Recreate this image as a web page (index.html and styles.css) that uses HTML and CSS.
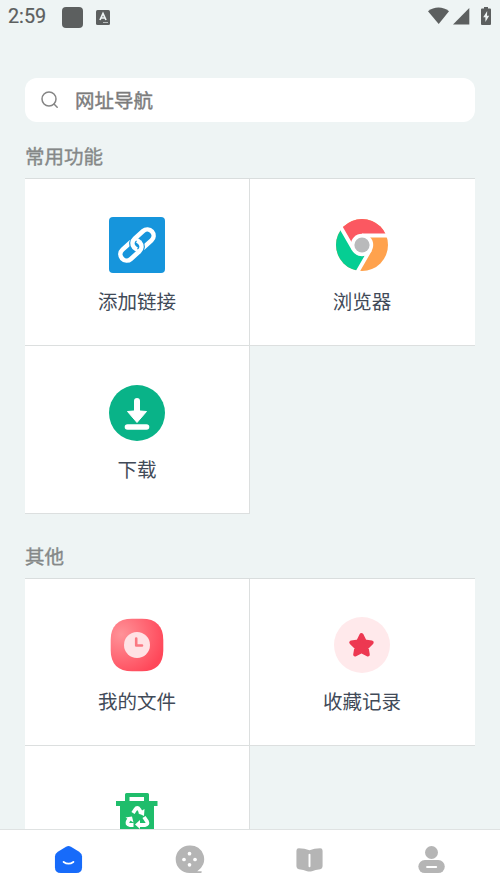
FILE: index.html
```html
<!DOCTYPE html>
<html lang="zh-CN">
<head>
<meta charset="utf-8">
<title>网址导航</title>
<link rel="stylesheet" href="styles.css">
</head>
<body>
<header class="status">
  <span class="time">2:59</span>
  <span class="chip"></span>
  <svg class="keyboard" width="14" height="15" viewBox="0 0 14 15"><rect width="14" height="15" rx="1.5" fill="#5c5f5f"/><path d="M4 10 7 3.5 10 10M5.2 8h3.6" fill="none" stroke="#eef4f4" stroke-width="1.7"/><path d="M7 12.5h5" stroke="#b9bdbd"/></svg>
  <svg class="signals" width="64" height="20" viewBox="0 0 64 20"><g fill="#5c5f5f"><path d="M0 4.200C6-.8 15-.8 21 4.200L10.700 17Z"/><path d="M41.300 1v16.500H25Z"/><path d="M56 0h4v1.500h2q1 0 1 1V17q0 1-1 1h-8q-1 0-1-1V2.500q0-1 1-1h2Z"/></g><path d="m59.200 4-4 6.200h2.200V15l3.800-6.300H59Z" fill="#eef4f4"/></svg>
</header>
<main class="content">
  <div class="search">
    <svg width="20" height="20" viewBox="0 0 20 20" fill="none" stroke="#858585" stroke-width="1.500" stroke-linecap="round"><circle cx="9" cy="9" r="7"/><path d="m14 14 3.200 3.200"/></svg>
    <span>网址导航</span>
  </div>
  <h2 class="heading">常用功能</h2>
  <section class="grid">
    <div class="cell">
      <svg class="icon" viewBox="0 0 56 56"><rect width="56" height="56" rx="4" fill="#1695dc"/><g transform="translate(28 28) rotate(-42)" fill="none" stroke="#fff" stroke-width="4.600"><rect x="-20.150" y="-6.250" width="24" height="12.500" rx="6.250"/><path d="M-3.850 0A6.250 6.250 0 0 1 2.400-6.250" stroke="#1695dc" stroke-width="7"/><rect x="-3.850" y="-6.250" width="24" height="12.500" rx="6.250"/><path d="M3.850 0A6.250 6.250 0 0 1-2.400 6.250" stroke="#1695dc" stroke-width="7"/><path d="M3.850-.5V0A6.250 6.250 0 0 1-2.400 6.250H-3"/></g></svg>
      <span class="label">添加链接</span>
    </div>
    <div class="cell">
      <svg class="icon" viewBox="0 0 56 56"><defs><clipPath id="disc"><circle cx="28" cy="28" r="26"/></clipPath></defs><g clip-path="url(#disc)"><path fill="#ffa24d" d="M0 0h56v56H0z"/><path fill="#fb5861" d="M28 28 19.770 32.750 5.770 8.500 0 0H56V18.500H28Z"/><path fill="#05ce93" d="M28 28 36.230 32.750 22.230 57H0V0L5.770 8.500 19.770 32.750Z"/></g><g stroke="#fff" stroke-width="3.800" fill="none"><path d="M28 18.500H56M36.230 32.750 22.230 57M19.770 32.750 5.770 8.500"/></g><circle cx="28" cy="28" r="11.200" fill="#fff"/><circle cx="28" cy="28" r="7.600" fill="#b9babb"/></svg>
      <span class="label">浏览器</span>
    </div>
    <div class="cell">
      <svg class="icon" viewBox="0 0 56 56"><circle cx="28" cy="28" r="28" fill="#09b388"/><path d="M28 16v16" stroke="#fff" stroke-width="6" stroke-linecap="round"/><path d="M18.500 26.500Q28 25 37.500 26.500L28 37.500Z" fill="#fff" stroke="#fff" stroke-linejoin="round"/><path d="M18.500 42h19" stroke="#fff" stroke-width="5.600" stroke-linecap="round"/></svg>
      <span class="label">下载</span>
    </div>
  </section>
  <h2 class="heading second">其他</h2>
  <section class="grid">
    <div class="cell">
      <svg class="icon" viewBox="0 0 56 56"><defs><radialGradient id="rose" cx=".2" cy=".3" r=".85"><stop stop-color="#ff9298"/><stop offset="1" stop-color="#ff4759"/></radialGradient></defs><path d="M23 1.700H33C47 1.700 54.300 9 54.300 23V33C54.300 47 47 54.300 33 54.300H23C9 54.300 1.700 47 1.700 33V23C1.700 9 9 1.700 23 1.700Z" fill="url(#rose)"/><circle cx="28" cy="28" r="13" fill="#ffe2e5"/><path d="M27.200 21.500V28.500H33" fill="none" stroke="#fa7882" stroke-width="2.600" stroke-linecap="round" stroke-linejoin="round"/></svg>
      <span class="label">我的文件</span>
    </div>
    <div class="cell">
      <svg class="icon" viewBox="0 0 56 56"><circle cx="28" cy="28" r="28" fill="#ffe9eb"/><path d="m27.500 18 3.200 6.500 7 1-5.100 5 1.200 7-6.300-3.300-6.300 3.300 1.200-7-5.100-5 7-1Z" fill="#ed3851" stroke="#ed3851" stroke-width="4" stroke-linejoin="round"/></svg>
      <span class="label">收藏记录</span>
    </div>
    <div class="cell">
      <svg class="icon" viewBox="0 0 56 56"><path fill="#1fbd6b" d="M17.500 8h21q1.500 0 1.500 1.500V16h8.500v5H45v32H11V21H7v-5h9V9.500Q16 8 17.500 8Zm3 4v4h14.500v-4Z"/><g fill="none" stroke="#fff" stroke-width="3.800"><path d="m24 28 2.300-3.500q2-3 4 0l2.300 4M35 32l3 4.500q1.500 3-2 3.500h-5M24.500 40H21q-4-.500-2-4l2-3"/></g><path fill="#fff" d="m35.500 24-.500 7-6-3ZM31 35v9l-5-4.500ZM16.500 32.500l6.500-1 1.500 6Z"/></svg>
    </div>
  </section>
</main>
<nav class="tabs">
  <svg class="tab" viewBox="0 0 32 32"><path d="M13.500 2.800Q16 1.300 18.500 2.800L27 8Q30 10 30 13V24Q30 30 24 30H8Q2 30 2 24V13Q2 10 5 8Z" fill="#176bfa"/><path d="M11 18.500q5 3.500 10 0" stroke="#fff" stroke-width="2" fill="none" stroke-linecap="round"/></svg>
  <svg class="tab" viewBox="0 0 32 32"><path fill="#b5b5b5" d="M16 1.500A14.200 14.200 0 1 0 16 30h12q1.500-1.500 0-2h-4A14.200 14.200 0 0 0 16 1.500Z"/><g fill="#fff"><circle cx="16" cy="10" r="1.900"/><circle cx="10.300" cy="16" r="1.900"/><circle cx="21.700" cy="16" r="1.900"/><circle cx="16" cy="21.500" r="1.900"/></g></svg>
  <svg class="tab book" viewBox="0 0 32 32"><path fill="#b5b5b5" d="M5 4.500q6 .2 11 2 5-1.800 11-2 2.500 0 2.500 2.500V23q0 2.500-2.500 3-5 .5-8.500 2-2.500 1-5 0Q10 26.500 5 26q-2.500-.5-2.500-3V7Q2.500 4.500 5 4.500Z"/><path d="M16 11v12" stroke="#fff" stroke-width="2" stroke-linecap="round"/></svg>
  <svg class="tab" viewBox="0 0 32 32"><g fill="#b5b5b5"><circle cx="16" cy="8.800" r="6.700"/><rect x="2.400" y="16.500" width="27.300" height="13.500" rx="6.700"/></g><path d="M11.500 23.800h9.300" stroke="#fff" stroke-width="2.200" stroke-linecap="round"/></svg>
</nav>
</body>
</html>
```

FILE: styles.css
```css
* { box-sizing: border-box; }
body {
  margin: 0;
  height: 888px;
  display: flex;
  flex-direction: column;
  overflow: hidden;
  background: #eef4f4;
  font-family: "Noto Sans CJK SC", sans-serif;
}
svg { display: block; flex: none; }
.status {
  height: 36px;
  flex: none;
  display: flex;
  align-items: center;
  padding: 0 8px 2px;
}
.time {
  width: 54px;
  font: 400 19.8px/20px Roboto, sans-serif;
  color: #5c5f5f;
  -webkit-text-stroke: .2px #5c5f5f;
}
.chip {
  width: 21px;
  height: 21px;
  border-radius: 4px;
  background: #5c5f5f;
}
.keyboard { margin-left: 13px; }
.signals { margin-left: auto; }
.content {
  flex: 1;
  min-height: 0;
  overflow: hidden;
  padding: 42px 25px 0;
}
.search {
  height: 44px;
  display: flex;
  align-items: center;
  gap: 15px;
  padding-left: 15px;
  border-radius: 12px;
  background: #fff;
  color: #7c7c7c;
  font-size: 19.5px;
  line-height: 28px;
  -webkit-text-stroke: .4px #7c7c7c;
}
.heading {
  margin: 0;
  height: 56px;
  padding-top: 20px;
  font-size: 19.5px;
  font-weight: 400;
  line-height: 28px;
  color: #858888;
  -webkit-text-stroke: .4px #858888;
}
.heading.second {
  height: 64px;
  padding-top: 28px;
}
.grid {
  display: grid;
  grid-template-columns: 225px 225px;
  grid-template-rows: 167px 168px;
  border-top: 1px solid #d9dddd;
}
.cell {
  display: flex;
  flex-direction: column;
  align-items: center;
  padding-top: 38px;
  background: #fff;
  border-bottom: 1px solid #dcdfdf;
}
.cell:nth-child(odd) { border-right: 1px solid #dcdfdf; }
.cell:nth-child(even) { padding-right: 1px; }
.cell:nth-child(3) { padding-top: 39px; }
.icon { width: 56px; height: 56px; }
.label {
  margin-top: 14px;
  font-size: 19.5px;
  line-height: 28px;
  color: #414a58;
}
.tabs {
  height: 59px;
  flex: none;
  display: flex;
  justify-content: space-between;
  padding: 14px 53px 0;
  border-top: 1px solid #dfe2e2;
  background: #fff;
}
.tab { width: 31px; height: 31px; }
.book { margin: 0 1px 0 -1px; }
```
